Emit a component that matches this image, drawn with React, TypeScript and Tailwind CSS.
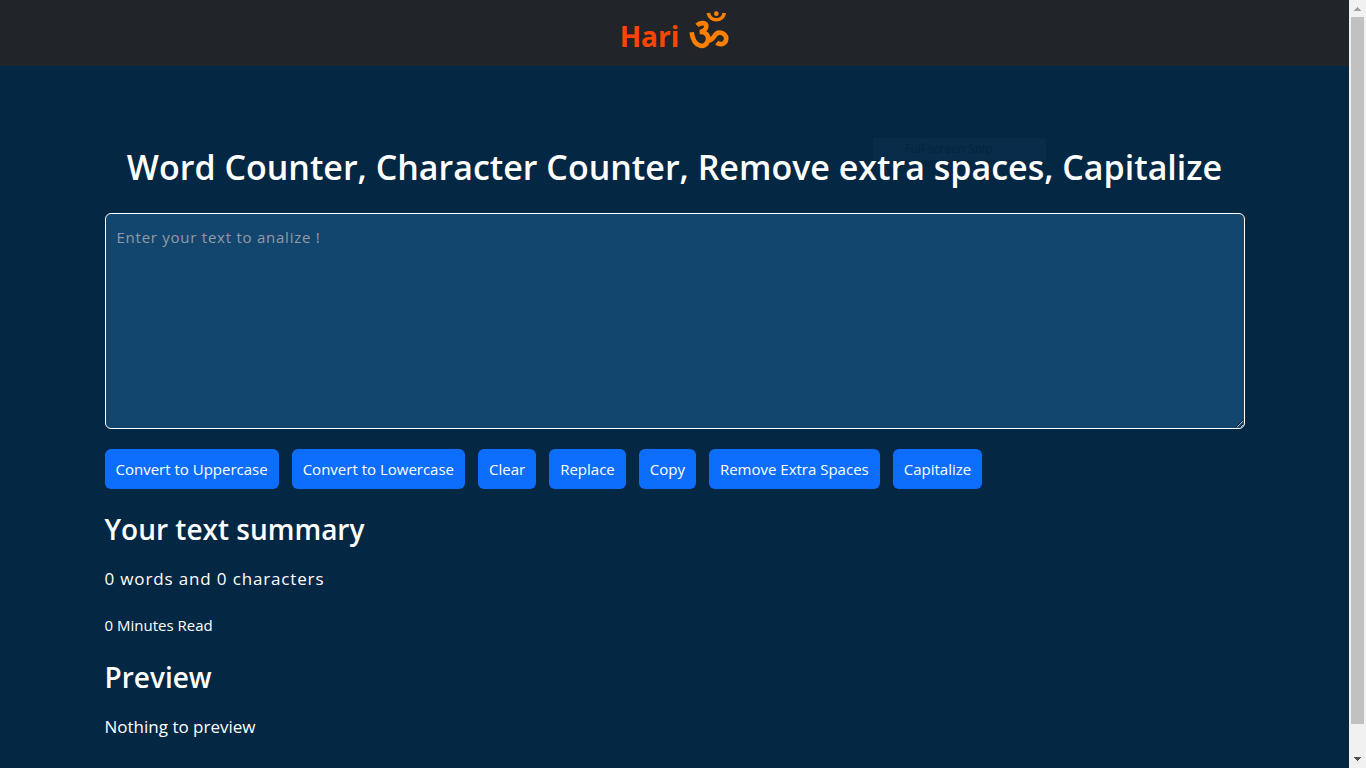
import { useState } from "react";

const buttonClass =
  "h-10 rounded-md bg-[#0d6efd] px-[11px] text-[15px] text-white hover:bg-[#0b5ed7]";

function OmMark() {
  return (
    <svg viewBox="8 9 120 114" className="h-[38px] w-10" fill="none" stroke="#ff8000" strokeWidth="14" role="img" aria-label="Om">
      <path d="M66 15C71 42 109 42 114 15" strokeWidth="11" />
      <circle cx="90" cy="17" r="7" fill="#ff8000" stroke="none" />
      <path d="M32 52C42 42 60 43 60 55C60 65 50 72 40 72C58 71 68 82 65 97C59 122 22 122 16 73" />
      <path d="M65 97C84 99 82 74 98 74C113 74 122 84 119 96C116 109 101 112 91 104" />
    </svg>
  );
}

export default function App() {
  const [text, setText] = useState("");
  const words = text.split(/\s+/).filter(Boolean);

  const replaceText = () => {
    const from = window.prompt("Find");
    if (from) setText(text.replaceAll(from, window.prompt("Replace with") ?? ""));
  };

  return (
    <div className="flex h-screen bg-[#042743] font-['Open_Sans','Noto_Sans',sans-serif] text-white">
      <div className="min-w-0 flex-1 overflow-hidden">
        <nav className="flex h-[66px] items-center justify-center bg-[#212529] pb-1.5">
          <a href="#" className="flex items-center gap-2.5">
            <span className="pt-3 text-[28px] leading-8 font-bold text-[#ff4500]">Hari</span>
            <OmMark />
          </a>
        </nav>

        <main className="relative mx-auto max-w-[1140px] pt-[76px]">
          <div aria-hidden="true" className="absolute top-[72px] right-[199px] h-[22px] w-[173px] bg-[#082c49] pl-8 text-xs leading-[22px] text-[#042541]">
            Full-screen Snip
          </div>
          <h1 className="relative text-center text-[34px] leading-[50px] font-semibold">
            <label htmlFor="source">Word Counter, Character Counter, Remove extra spaces, Capitalize</label>
          </h1>
          <textarea
            id="source"
            value={text}
            onChange={(e) => setText(e.target.value)}
            placeholder="Enter your text to analize !"
            className="mt-[21px] block h-[216px] w-full rounded-md border border-white bg-[#13466e] px-[11px] py-[11px] text-[15px] leading-6 tracking-wider placeholder:text-[#929ba5]"
          />
          <div className="mt-5 flex flex-wrap gap-[13px]">
            <button className={buttonClass} onClick={() => setText(text.toUpperCase())}>Convert to Uppercase</button>
            <button className={buttonClass} onClick={() => setText(text.toLowerCase())}>Convert to Lowercase</button>
            <button className={buttonClass} onClick={() => setText("")}>Clear</button>
            <button className={buttonClass} onClick={replaceText}>Replace</button>
            <button className={buttonClass} onClick={() => navigator.clipboard.writeText(text)}>Copy</button>
            <button className={buttonClass} onClick={() => setText(words.join(" "))}>Remove Extra Spaces</button>
            <button className={buttonClass} onClick={() => setText(text.replace(/\b\w/g, (c) => c.toUpperCase()))}>Capitalize</button>
          </div>

          <h2 className="mt-5 text-[28px] leading-10 font-semibold">Your text summary</h2>
          <p className="mt-4 text-[17px] leading-7 tracking-wider">
            {words.length} words and {text.length} characters
          </p>
          <p className="mt-5 text-[15px] leading-6">{Math.round(words.length * 0.008)} Minutes Read</p>
          <h2 className="mt-5 text-[28px] leading-10 font-semibold">Preview</h2>
          <p className="mt-4 text-[17px] leading-7">{text || "Nothing to preview"}</p>
        </main>
      </div>

      <div aria-hidden="true" className="flex w-[17px] shrink-0 flex-col items-center bg-[#f1f1f1]">
        <svg viewBox="0 0 17 17" className="size-[17px] shrink-0" shapeRendering="crispEdges">
          <path d="M5 11L8.5 7L12 11Z" fill="#a3a3a3" />
        </svg>
        <div className="flex min-h-0 w-[13px] flex-1 flex-col">
          <div className="h-[96.3%] bg-[#c1c1c1]" />
        </div>
        <svg viewBox="0 0 17 17" className="size-[17px] shrink-0" shapeRendering="crispEdges">
          <path d="M5 6L8.5 10L12 6Z" fill="#505050" />
        </svg>
      </div>
    </div>
  );
}
